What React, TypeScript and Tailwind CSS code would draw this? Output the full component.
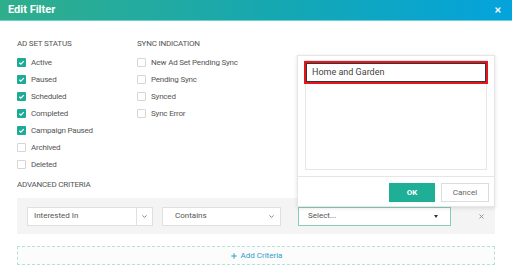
import { ChevronDown, Plus, X } from 'lucide-react';

const statusItems = [
  { label: 'Active', checked: true },
  { label: 'Paused', checked: true },
  { label: 'Scheduled', checked: true },
  { label: 'Completed', checked: true },
  { label: 'Campaign Paused', checked: true },
  { label: 'Archived', checked: false },
  { label: 'Deleted', checked: false },
];

const syncItems = ['New Ad Set Pending Sync', 'Pending Sync', 'Synced', 'Sync Error'];

const Check = ({ checked }: { checked: boolean }) =>
  checked ? (
    <span className="flex h-[9px] w-[9px] items-center justify-center rounded-[1px] bg-[#1eab96]">
      <svg width="7" height="7" viewBox="0 0 8 8">
        <path d="M1.5 4.2 L3.3 5.8 L6.6 2.4" fill="none" stroke="white" strokeWidth="1.4" />
      </svg>
    </span>
  ) : (
    <span className="h-[9px] w-[9px] rounded-[1px] border border-[#d6d6d6] bg-white" />
  );

const Row = ({ label, checked }: { label: string; checked: boolean }) => (
  <div className="flex h-[17px] items-center gap-[5px]">
    <Check checked={checked} />
    <span className="text-[8px] tracking-[-0.2px] text-[#555]">{label}</span>
  </div>
);

const App = () => {
  return (
    <div className="relative h-[271px] w-[512px] overflow-hidden bg-white font-['Roboto',sans-serif]">
      {/* Header */}
      <div className="flex h-[21px] items-center justify-between border-b border-[#6fcfd4] bg-gradient-to-r from-[#2fae8b] via-[#17a8ae] to-[#05a3dc] pl-[8px] pr-[10px]">
        <span className="text-[11px] font-bold text-white">Edit Filter</span>
        <X size={8} strokeWidth={4} className="text-white" />
      </div>

      <div className="px-[17px] pt-[18px]">
        <div className="flex">
          <div className="w-[120px]">
            <div className="h-[10px] text-[8px] leading-[10px] tracking-[-0.2px] text-[#555]">AD SET STATUS</div>
            <div className="mt-[5px]">
              {statusItems.map((item) => (
                <Row key={item.label} label={item.label} checked={item.checked} />
              ))}
            </div>
          </div>
          <div>
            <div className="h-[10px] text-[8px] leading-[10px] tracking-[-0.2px] text-[#555]">SYNC INDICATION</div>
            <div className="mt-[5px]">
              {syncItems.map((label) => (
                <Row key={label} label={label} checked={false} />
              ))}
            </div>
          </div>
        </div>

        <div className="mt-[7px] h-[10px] text-[8px] leading-[10px] tracking-[-0.2px] text-[#555]">ADVANCED CRITERIA</div>

        {/* Criteria row */}
        <div className="mt-[8px] flex h-[36px] items-center bg-[#f4f4f4] pl-[10px]">
          <div className="flex h-[19px] w-[126px] items-center border border-[#e0e0e0] bg-white">
            <span className="flex-1 pl-[6px] text-[8px] text-[#555]">Interested In</span>
            <span className="flex h-full w-[16px] items-center justify-center border-l border-[#e0e0e0]">
              <ChevronDown size={7} strokeWidth={3} className="text-[#777]" />
            </span>
          </div>
          <div className="ml-[9px] flex h-[19px] w-[119px] items-center justify-between border border-[#e0e0e0] bg-white pl-[12px] pr-[5px]">
            <span className="text-[8px] text-[#555]">Contains</span>
            <ChevronDown size={7} strokeWidth={3} className="text-[#777]" />
          </div>
          <div className="ml-[17px] flex h-[19px] w-[153px] items-center justify-between border border-[#86cdbd] bg-white pl-[9px] pr-[12px]">
            <span className="text-[8px] text-[#555]">Select...</span>
            <svg width="4" height="3" viewBox="0 0 4 3">
              <path d="M0 0 L4 0 L2 3 Z" fill="#333" />
            </svg>
          </div>
          <X size={7} strokeWidth={3} className="ml-[27px] text-[#888]" />
        </div>

        {/* Add criteria */}
        <div className="mt-[12px] flex h-[19px] items-center justify-center gap-[3px] border border-dashed border-[#b7e2da] bg-[#fcfcfc]">
          <Plus size={8} strokeWidth={3} className="text-[#2a9fc9]" />
          <span className="text-[8px] text-[#2a9fc9]">Add Criteria</span>
        </div>
      </div>

      {/* Dropdown panel */}
      <div className="absolute left-[297px] top-[55px] h-[152px] w-[198px] border border-[#e6e6e6] bg-white shadow-[0_1px_4px_rgba(0,0,0,0.12)]">
        <div className="relative mx-[7px] mt-[4px] h-[110px] border border-[#e6e6e6]">
          <div className="absolute -left-[2px] -right-[2px] top-0 flex h-[23px] items-center border-2 border-[#e8141a] bg-white pl-[6px] shadow-[inset_0_0_0_1px_#2a3a3a]">
            <span className="text-[9px] text-[#444]">Home and Garden</span>
          </div>
        </div>
        <div className="mt-[6px] border-t border-[#e6e6e6]" />
        <div className="mt-[6px] flex justify-end gap-[6px] pr-[5px]">
          <div className="flex h-[19px] w-[46px] items-center justify-center bg-[#1fae96] text-[8px] font-bold text-white">
            OK
          </div>
          <div className="flex h-[19px] w-[48px] items-center justify-center border border-[#dcdcdc] bg-white text-[8px] text-[#666]">
            Cancel
          </div>
        </div>
      </div>
    </div>
  );
};

export default App;
